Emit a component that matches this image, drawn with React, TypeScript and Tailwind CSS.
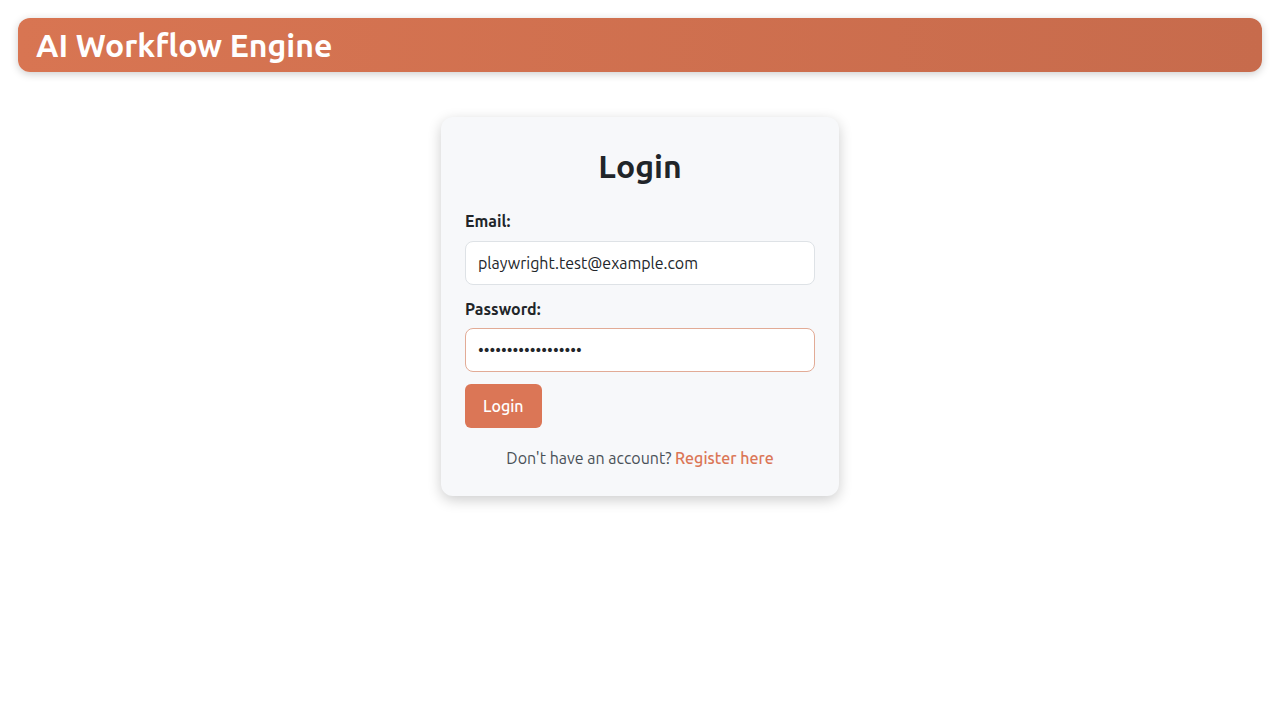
export default function App() {
    return (
        <div className="min-h-screen bg-white p-[18px] text-[#212529]" style={{ fontFamily: 'Ubuntu, "Noto Sans", "Open Sans", sans-serif' }}>
            <header className="flex h-[54px] items-center rounded-xl bg-gradient-to-r from-[#d87552] to-[#c76b4c] px-[18px] shadow-[0_2px_8px_rgba(0,0,0,0.2)]">
                <h1 className="text-[32px] font-bold leading-none text-white">AI Workflow Engine</h1>
            </header>
            <main className="flex justify-center pt-[45px]">
                <form className="w-[398px] rounded-xl bg-[#f7f8fa] px-6 pb-[26px] pt-[30px] shadow-[0_4px_14px_rgba(0,0,0,0.2)]">
                    <h2 className="mb-[24px] text-center text-[32px] font-bold leading-[38px]">Login</h2>
                    <div className="mb-3 flex flex-col gap-2">
                        <label htmlFor="email" className="text-base font-bold leading-6">Email:</label>
                        <input
                            id="email"
                            type="email"
                            defaultValue="playwright.test@example.com"
                            className="h-[44px] rounded-lg border border-[#dee2e6] bg-white px-3 text-base text-[#212529] outline-none"
                        />
                    </div>
                    <div className="mb-3 flex flex-col gap-[7px]">
                        <label htmlFor="password" className="text-base font-bold leading-6">Password:</label>
                        <input
                            id="password"
                            type="password"
                            defaultValue="playwright-secrets"
                            className="h-[44px] rounded-lg border border-[#e2ab96] bg-white px-3 text-base text-[#212529] outline-none"
                        />
                    </div>
                    <button type="submit" className="h-[44px] rounded-md bg-[#db7656] px-[18px] text-base font-medium text-white">
                        Login
                    </button>
                    <p className="mt-[18px] text-center text-base leading-6 text-[#495057]">
                        Don't have an account? <a href="#" className="font-medium text-[#db7656]">Register here</a>
                    </p>
                </form>
            </main>
        </div>
    )
}
